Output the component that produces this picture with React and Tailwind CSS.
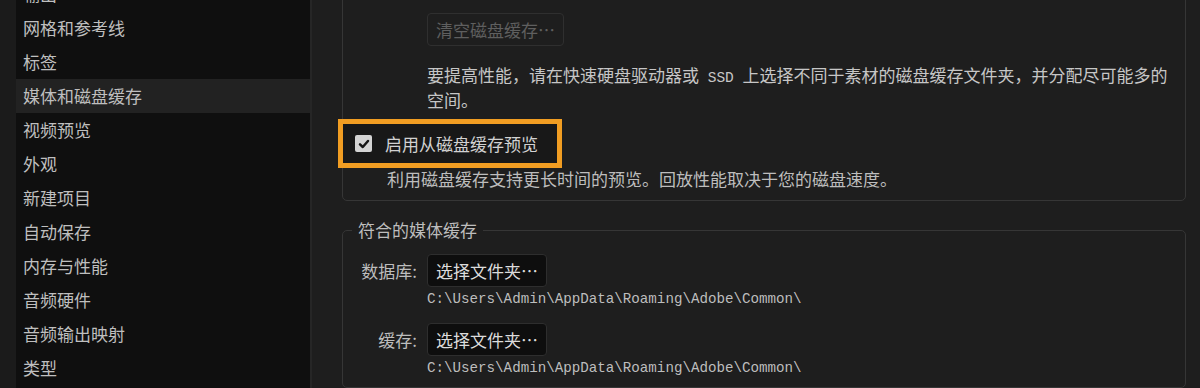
import React from "react";

const CJK = { fontFamily: '"Noto Sans CJK SC", "Noto Sans", sans-serif' };
const MONO = { fontFamily: '"Liberation Mono", "DejaVu Sans Mono", monospace' };

const items = [
  "输出",
  "网格和参考线",
  "标签",
  "媒体和磁盘缓存",
  "视频预览",
  "外观",
  "新建项目",
  "自动保存",
  "内存与性能",
  "音频硬件",
  "音频输出映射",
  "类型",
];

function FolderRow({ label }) {
  return (
    <div className="flex">
      <div className="w-[74px] text-right h-[33px] leading-[33px] text-[#bdbdbd]">{label}</div>
      <div className="ml-[10px] flex flex-col">
        <div className="w-[120px] h-[33px] rounded-[4px] border border-[#2e2e2e] bg-[#0e0e0e] text-[#dcdcdc] flex items-center justify-center">
          选择文件夹…
        </div>
        <div className="mt-[3px] h-[18px] leading-[18px] text-[14.2px] text-[#bdbdbd] whitespace-nowrap" style={MONO}>
          C:\Users\Admin\AppData\Roaming\Adobe\Common\
        </div>
      </div>
    </div>
  );
}

export default function App() {
  return (
    <div className="w-[1200px] h-[388px] overflow-hidden flex bg-[#1e1e1e] text-[17px]" style={CJK}>
      <div className="w-[16px] shrink-0 bg-[#1b1b1b]" />
      <div className="w-[294px] shrink-0 bg-[#0f0f0f]">
        <div className="-mt-[23px] flex flex-col">
          {items.map((t) => (
            <div
              key={t}
              className={
                "h-[34px] leading-[34px] pl-[7px] text-[#bfbfbf] " +
                (t === "媒体和磁盘缓存" ? "bg-[#222222]" : "")
              }
            >
              {t}
            </div>
          ))}
        </div>
      </div>
      <div className="w-[2px] shrink-0 bg-[#262626]" />
      <div className="flex-1 pl-[30px] pr-[14px] flex flex-col">
        <div className="-mt-[12px] rounded-[5px] border border-[#363636] pt-[24px] pb-[10px] flex flex-col">
          <div className="pl-[84px]">
            <div className="w-[137px] h-[33px] rounded-[4px] border border-[#2f2f2f] bg-[#1e1e1e] text-[#5f5f5f] flex items-center justify-center">
              清空磁盘缓存…
            </div>
            <div className="mt-[18px] leading-[22px] text-[#c6c6c6] whitespace-nowrap">
              要提高性能，请在快速硬盘驱动器或<span className="text-[14.5px]" style={MONO}> SSD </span>上选择不同于素材的磁盘缓存文件夹，并分配尽可能多的
              <br />
              空间。
            </div>
          </div>
          <div className="mt-[13px] w-[214px] h-[39px] flex items-center bg-[#181818] outline-[5px] outline-solid outline-[#f19d22]">
            <div className="ml-[12px] w-[17px] h-[17px] rounded-[2px] bg-[#d4d4d4] flex items-center justify-center">
              <svg width="12" height="12" viewBox="0 0 12 12">
                <path d="M2 6.3 L4.8 9 L10 3" fill="none" stroke="#161616" strokeWidth="2.5" strokeLinecap="round" strokeLinejoin="round" />
              </svg>
            </div>
            <div className="ml-[13px] text-[#d2d2d2]">启用从磁盘缓存预览</div>
          </div>
          <div className="mt-[5px] pl-[44px] leading-[22px] text-[#bdbdbd] whitespace-nowrap">
            利用磁盘缓存支持更长时间的预览。回放性能取决于您的磁盘速度。
          </div>
        </div>
        <fieldset className="mt-[18px] rounded-[5px] border border-[#363636] pb-[10px]">
          <legend className="ml-[9px] px-[6px] leading-[22px] text-[#bdbdbd]">符合的媒体缓存</legend>
          <div className="pt-[13px] flex flex-col">
            <FolderRow label="数据库:" />
            <div className="mt-[15px]">
              <FolderRow label="缓存:" />
            </div>
          </div>
        </fieldset>
      </div>
    </div>
  );
}
